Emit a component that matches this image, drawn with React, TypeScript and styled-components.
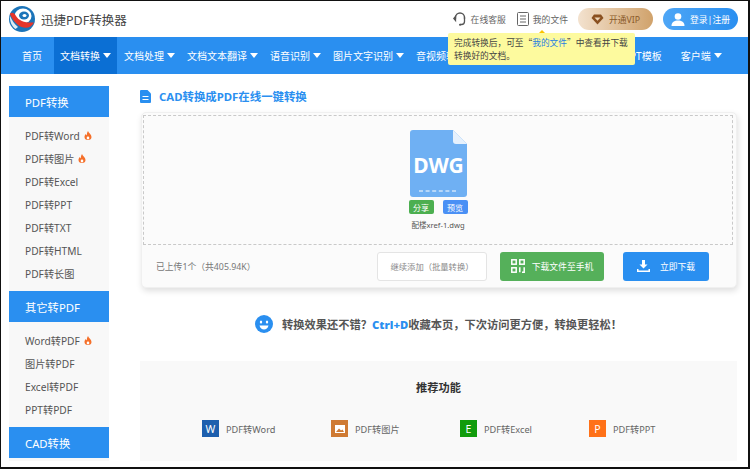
import React from "react";
import styled, { createGlobalStyle } from "styled-components";

const FONT = `"Noto Sans", "Noto Sans CJK SC", sans-serif`;
const CJK_FONT = `"Noto Sans CJK SC", "Noto Sans", sans-serif`;
const BLUE = "#2a8ff0";

const GlobalStyle = createGlobalStyle`
  html, body {
    margin: 0;
    padding: 0;
    background: #fff;
    font-family: ${FONT};
  }
  * { box-sizing: border-box; }
`;

const Frame = styled.div`
  width: 750px;
  height: 469px;
  border-style: solid;
  border-color: #111;
  border-width: 1px 2px 2px 1px;
  background: #fff;
  overflow: hidden;
  position: relative;
`;

const Header = styled.header`
  height: 36px;
  display: flex;
  align-items: center;
  padding: 0 10px 0 8px;
`;

const LogoTitle = styled.div`
  margin-left: 6px;
  font-size: 12.5px;
  color: #444;
  flex: 1;
`;

const HeaderLink = styled.a`
  display: flex;
  align-items: center;
  gap: 4px;
  font-size: 8.8px;
  color: #666;
  margin-left: 11px;
`;

const PillButton = styled.div<{ $from: string; $to: string; $color: string }>`
  width: 75px;
  height: 22px;
  border-radius: 11px;
  margin-left: 10px;
  display: flex;
  align-items: center;
  justify-content: center;
  gap: 5px;
  font-size: 8.8px;
  white-space: nowrap;
  color: ${(p) => p.$color};
  background: linear-gradient(90deg, ${(p) => p.$from}, ${(p) => p.$to});
`;

const Nav = styled.nav`
  height: 37px;
  background: ${BLUE};
  display: flex;
  padding-left: 15px;
`;

const NavItem = styled.div<{ $active?: boolean; $ml?: number }>`
  height: 37px;
  display: flex;
  align-items: center;
  gap: 3px;
  padding: 0 6px;
  margin-left: ${(p) => p.$ml ?? 0}px;
  font-size: 10px;
  white-space: nowrap;
  color: #fff;
  background: ${(p) => (p.$active ? "#0b6fd4" : "transparent")};
`;

const Caret = styled.i`
  width: 0;
  height: 0;
  border-left: 4px solid transparent;
  border-right: 4px solid transparent;
  border-top: 5px solid #fff;
`;

const Tooltip = styled.div`
  position: absolute;
  left: 447px;
  top: 32px;
  width: 187px;
  height: 32px;
  padding: 4px 6px 0;
  background: #fdfa9e;
  border-radius: 2px;
  font-family: ${CJK_FONT};
  font-size: 8.7px;
  line-height: 12.5px;
  white-space: nowrap;
  color: #444;
  z-index: 2;

  &::before {
    content: "";
    position: absolute;
    left: 91px;
    top: -3px;
    border-left: 3px solid transparent;
    border-right: 3px solid transparent;
    border-bottom: 3px solid #fbc400;
  }

  em {
    font-style: normal;
    color: #2a7fe0;
  }
`;

const Body = styled.div`
  display: flex;
  padding: 12px 10px 0 8px;
`;

const Sidebar = styled.aside`
  width: 100px;
  flex: none;
  background: #f8f8f8;
`;

const SideHeading = styled.div`
  height: 31px;
  padding-left: 16px;
  display: flex;
  align-items: center;
  font-size: 11.3px;
  color: #fff;
  background: ${BLUE};
`;

const SideList = styled.ul`
  list-style: none;
  margin: 0;
  padding: 7px 0 6px 16px;
`;

const SideItem = styled.li`
  height: 23px;
  display: flex;
  align-items: center;
  gap: 4px;
  font-size: 10.2px;
  color: #555;
`;

const Main = styled.main`
  width: 597px;
  margin-left: 31px;
  flex: none;
`;

const TitleRow = styled.div`
  height: 20px;
  margin-bottom: 6px;
  display: flex;
  align-items: center;
  gap: 8px;
`;

const Title = styled.h1`
  margin: 0;
  font-size: 11.4px;
  font-weight: 700;
  color: ${BLUE};
`;

const Card = styled.section`
  height: 176px;
  margin-left: 1px;
  background: #fbfbfb;
  border-radius: 5px;
  border: 1px solid #f0f0f0;
  box-shadow: 1px 3px 6px rgba(0, 0, 0, 0.13);
  padding: 2px 3px 0 1px;
`;

const DropZone = styled.div`
  height: 130px;
  border: 1px dashed #c9c9c9;
  display: flex;
  flex-direction: column;
  align-items: center;
  padding-top: 14px;
`;

const BadgeRow = styled.div`
  display: flex;
  gap: 9px;
  margin-top: 3px;
`;

const Badge = styled.span<{ $bg: string }>`
  width: 25px;
  height: 14px;
  border-radius: 2px;
  background: ${(p) => p.$bg};
  color: #fff;
  font-size: 8px;
  display: flex;
  align-items: center;
  justify-content: center;
`;

const FileName = styled.div`
  margin-top: 5px;
  font-size: 7.6px;
  line-height: 12px;
  color: #555;
`;

const Toolbar = styled.div`
  display: flex;
  align-items: center;
  height: 42px;
  padding-left: 13px;
`;

const UploadInfo = styled.div`
  width: 221px;
  font-size: 8.8px;
  color: #777;
`;

const ActionButton = styled.div<{ $bg: string; $w: number; $ml: number; $gap: number }>`
  width: ${(p) => p.$w}px;
  height: 29px;
  margin-left: ${(p) => p.$ml}px;
  border-radius: 3px;
  display: flex;
  align-items: center;
  justify-content: center;
  gap: ${(p) => p.$gap}px;
  background: ${(p) => p.$bg};
  color: #fff;
  font-size: 8.8px;
  white-space: nowrap;
`;

const GhostButton = styled(ActionButton)`
  color: #888;
  font-size: 8.3px;
  border: 1px solid #e4e4e4;
`;

const Promo = styled.div`
  height: 18px;
  margin-top: 27px;
  padding-left: 115px;
  display: flex;
  align-items: center;
  gap: 9px;
  font-size: 11.25px;
  font-weight: 700;
  color: #555;
  white-space: nowrap;

  b {
    color: ${BLUE};
  }
`;

const Panel = styled.section`
  height: 100px;
  margin-top: 28px;
  background: #f9f9f9;
  padding-top: 20px;
`;

const PanelTitle = styled.h2`
  margin: 0;
  text-align: center;
  font-size: 11.2px;
  line-height: 14px;
  font-weight: 700;
  color: #333;
`;

const FeatureGrid = styled.div`
  display: grid;
  grid-template-columns: repeat(4, 129px);
  margin-top: 25px;
  padding-left: 62px;
`;

const Feature = styled.div`
  display: flex;
  align-items: center;
  gap: 7px;
  font-size: 9.2px;
  color: #666;
`;

const FeatureIcon = styled.span<{ $bg: string }>`
  width: 17px;
  height: 17px;
  flex: none;
  background: ${(p) => p.$bg};
  color: #fff;
  font-size: 10.5px;
  display: flex;
  align-items: center;
  justify-content: center;
`;

const Logo = () => (
  <svg width="26" height="26" viewBox="0 0 26 26">
    <circle cx="13" cy="13" r="13" fill="#1b74b9" />
    <ellipse cx="14" cy="10" rx="8.5" ry="7.5" fill="#fff" />
    <ellipse cx="15" cy="9.5" rx="5" ry="4" fill="#1b74b9" />
    <ellipse cx="15.5" cy="9.5" rx="2" ry="1.5" fill="#fff" />
    <path d="M0.8 8 C2.5 6 5 6 7 10 C10 15 16 17 25 16.5 C22 23 14 23 9 19 C5 16 3 12 0.8 8Z" fill="#e5352b" />
    <path d="M1 10 C3 14 5 18 9 21 L6.5 23 C3 20.5 0.5 15.5 1 10Z" fill="#dfeaf4" />
  </svg>
);

const Headset = () => (
  <svg width="14" height="16" viewBox="0 0 14 16" fill="none" stroke="#555" strokeWidth="1.3">
    <path d="M2.5 8 V6.5 a4.5 4.5 0 0 1 9 0 V8" />
    <path d="M2.5 5.5 L0.8 7.5 L2.5 9.5Z" fill="#555" />
    <path d="M11.5 5.5 V10.5 a3 3 0 0 1 -3 3 H7" />
    <circle cx="7" cy="13.7" r="1" fill="#555" stroke="none" />
  </svg>
);

const FileList = () => (
  <svg width="12" height="14" viewBox="0 0 12 14" fill="none" stroke="#666" strokeWidth="1">
    <rect x="0.5" y="0.5" width="11" height="13" rx="1" />
    <path d="M3 4 H9 M3 7 H9 M3 10 H9" />
  </svg>
);

const Diamond = () => (
  <svg width="13" height="11" viewBox="0 0 13 11">
    <path d="M3 0.5 H10 L12.5 4 L6.5 10.5 L0.5 4Z" fill="#8a5020" />
    <path d="M3.5 3.5 H9.5 L6.5 6.8Z" fill="#eed6b8" />
  </svg>
);

const User = () => (
  <svg width="14" height="13" viewBox="0 0 14 13" fill="#fff">
    <circle cx="7" cy="3.5" r="3.3" />
    <path d="M0.5 13 C0.5 9 3.5 7.5 7 7.5 C10.5 7.5 13.5 9 13.5 13Z" />
  </svg>
);

const Flame = () => (
  <svg width="8" height="9" viewBox="0 0 8 9">
    <path d="M4 0 C4.6 2 7.5 3.5 7.5 6 A3.5 3 0 0 1 0.5 6 C0.5 4.6 1.2 3.6 1.9 3 C2 3.8 2.4 4.2 2.8 4.3 C2.8 2.8 3.2 1.2 4 0Z" fill="#f5702a" />
    <ellipse cx="4" cy="7" rx="1.3" ry="1.4" fill="#fff" />
  </svg>
);

const DocIcon = () => (
  <svg width="11" height="13" viewBox="0 0 11 13">
    <path d="M1 0 H7.5 L11 3.5 V12 a1 1 0 0 1 -1 1 H1 a1 1 0 0 1 -1 -1 V1 a1 1 0 0 1 1 -1Z" fill={BLUE} />
    <path d="M2.5 6 H8.5 V7 H2.5Z M2.5 9 H8.5 V10 H2.5Z" fill="#fff" />
  </svg>
);

const DwgFile = () => (
  <svg width="57" height="67" viewBox="0 0 57 67">
    <path d="M3 0 H43 L57 14 V64 a3 3 0 0 1 -3 3 H3 a3 3 0 0 1 -3 -3 V3 a3 3 0 0 1 3 -3Z" fill="#6fb0f3" />
    <path d="M43 0 L57 14 H46 a3 3 0 0 1 -3 -3Z" fill="#e6f1fd" />
    <text x="28.5" y="42.5" textAnchor="middle" fontSize="21" fontWeight="700" fontFamily={FONT} fill="#fff">
      DWG
    </text>
    <path d="M9 61 H48" stroke="#fff" strokeWidth="1" strokeDasharray="4 2.6" />
  </svg>
);

const QrIcon = () => (
  <svg width="14" height="14" viewBox="0 0 14 14" fill="none" stroke="#fff" strokeWidth="1.5">
    <rect x="0.8" y="0.8" width="4.4" height="4.4" />
    <rect x="8.8" y="0.8" width="4.4" height="4.4" />
    <rect x="0.8" y="8.8" width="4.4" height="4.4" />
    <path d="M8.8 8.2 V13.2 M13.2 8.2 V13.2 H11" />
  </svg>
);

const DownloadIcon = () => (
  <svg width="13" height="12" viewBox="0 0 13 12" fill="#fff">
    <path d="M5 0 H8 V4.5 H10.5 L6.5 8.5 L2.5 4.5 H5Z" />
    <path d="M0 9 H1.5 V10.5 H11.5 V9 H13 V12 H0Z" />
  </svg>
);

const Smile = () => (
  <svg width="18" height="18" viewBox="0 0 18 18">
    <circle cx="9" cy="9" r="9" fill={BLUE} />
    <ellipse cx="6" cy="7" rx="1.2" ry="1.6" fill="#fff" />
    <ellipse cx="12" cy="7" rx="1.2" ry="1.6" fill="#fff" />
    <path d="M4.5 10.5 H13.5 C13 13 11 14.5 9 14.5 C7 14.5 5 13 4.5 10.5Z" fill="#fff" />
  </svg>
);

const PictureGlyph = () => (
  <svg width="10" height="8" viewBox="0 0 10 8">
    <path d="M0 0 H10 V8 H0Z" fill="#fff" />
    <path d="M1 7 L4 3.5 L6 5.5 L7.5 4.5 L9 7Z" fill="#cf7a33" />
  </svg>
);

const navItems = ["文档处理", "文档文本翻译", "语音识别", "图片文字识别", "音视频转换"];
const pdfItems = [
  { label: "PDF转Word", hot: true },
  { label: "PDF转图片", hot: true },
  { label: "PDF转Excel" },
  { label: "PDF转PPT" },
  { label: "PDF转TXT" },
  { label: "PDF转HTML" },
  { label: "PDF转长图" },
];
const otherItems = [
  { label: "Word转PDF", hot: true },
  { label: "图片转PDF" },
  { label: "Excel转PDF" },
  { label: "PPT转PDF" },
];

const renderItems = (items: { label: string; hot?: boolean }[]) => (
  <SideList>
    {items.map((item) => (
      <SideItem key={item.label}>
        {item.label}
        {item.hot && <Flame />}
      </SideItem>
    ))}
  </SideList>
);

const App: React.FC = () => {
  return (
    <Frame>
      <GlobalStyle />
      <Header>
        <Logo />
        <LogoTitle>迅捷PDF转换器</LogoTitle>
        <HeaderLink>
          <Headset />
          在线客服
        </HeaderLink>
        <HeaderLink>
          <FileList />
          我的文件
        </HeaderLink>
        <PillButton $from="#f3e2cf" $to="#d0a26b" $color="#8a5a2a">
          <Diamond />
          开通VIP
        </PillButton>
        <PillButton $from="#4ea6f6" $to={BLUE} $color="#fff">
          <User />
          登录|注册
        </PillButton>
      </Header>
      <Nav>
        <NavItem>首页</NavItem>
        <NavItem $active $ml={6}>
          文档转换
          <Caret />
        </NavItem>
        {navItems.map((label, i) => (
          <NavItem key={label} $ml={i === 0 ? 1 : 0}>
            {label}
            <Caret />
          </NavItem>
        ))}
        <NavItem $ml={135}>PPT模板</NavItem>
        <NavItem $ml={7}>
          客户端
          <Caret />
        </NavItem>
      </Nav>
      <Tooltip>
        完成转换后，可至“<em>我的文件</em>”中查看并下载
        <br />
        转换好的文档。
      </Tooltip>
      <Body>
        <Sidebar>
          <SideHeading>PDF转换</SideHeading>
          {renderItems(pdfItems)}
          <SideHeading>其它转PDF</SideHeading>
          {renderItems(otherItems)}
          <SideHeading>CAD转换</SideHeading>
        </Sidebar>
        <Main>
          <TitleRow>
            <DocIcon />
            <Title>CAD转换成PDF在线一键转换</Title>
          </TitleRow>
          <Card>
            <DropZone>
              <DwgFile />
              <BadgeRow>
                <Badge $bg="#4caf50">分享</Badge>
                <Badge $bg="#4a90f5">预览</Badge>
              </BadgeRow>
              <FileName>配楼xref-1.dwg</FileName>
            </DropZone>
            <Toolbar>
              <UploadInfo>已上传1个（共405.94K）</UploadInfo>
              <GhostButton $bg="#fff" $w={110} $ml={0} $gap={0}>
                继续添加（批量转换）
              </GhostButton>
              <ActionButton $bg="#55b05a" $w={104} $ml={13} $gap={7}>
                <QrIcon />
                下载文件至手机
              </ActionButton>
              <ActionButton $bg={BLUE} $w={86} $ml={19} $gap={10}>
                <DownloadIcon />
                立即下载
              </ActionButton>
            </Toolbar>
          </Card>
          <Promo>
            <Smile />
            <span>
              转换效果还不错？<b>Ctrl+D</b>收藏本页，下次访问更方便，转换更轻松！
            </span>
          </Promo>
          <Panel>
            <PanelTitle>推荐功能</PanelTitle>
            <FeatureGrid>
              <Feature>
                <FeatureIcon $bg="#1d5fae">W</FeatureIcon>
                PDF转Word
              </Feature>
              <Feature>
                <FeatureIcon $bg="#cf7a33">
                  <PictureGlyph />
                </FeatureIcon>
                PDF转图片
              </Feature>
              <Feature>
                <FeatureIcon $bg="#119c0c">E</FeatureIcon>
                PDF转Excel
              </Feature>
              <Feature>
                <FeatureIcon $bg="#ff7118">P</FeatureIcon>
                PDF转PPT
              </Feature>
            </FeatureGrid>
          </Panel>
        </Main>
      </Body>
    </Frame>
  );
};

export default App;
